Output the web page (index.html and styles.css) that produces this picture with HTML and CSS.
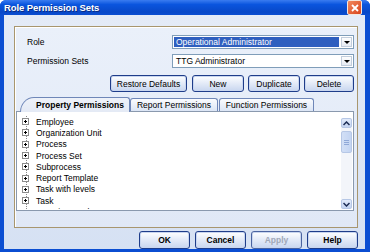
FILE: index.html
```html
<!DOCTYPE html>
<html lang="en">
<head>
    <meta charset="UTF-8">
    <title>Role Permission Sets</title>
    <link rel="stylesheet" href="styles.css">
</head>
<body>
    <div class="window">
        <!-- Title bar -->
        <div class="titlebar">
            <span class="title">Role Permission Sets</span>
            <span class="close">
                <svg width="8" height="8" viewBox="0 0 8 8"><path d="M1 1L7 7M7 1L1 7" stroke="#fff" stroke-width="1.8"/></svg>
            </span>
        </div>

        <div class="dialog-body">
            <div class="group">
                <div class="field-row">
                    <label>Role</label>
                    <div class="combo">
                        <span class="combo-text selected">Operational Administrator</span>
                        <span class="combo-arrow"></span>
                    </div>
                </div>
                <div class="field-row">
                    <label>Permission Sets</label>
                    <div class="combo">
                        <span class="combo-text">TTG Administrator</span>
                        <span class="combo-arrow"></span>
                    </div>
                </div>

                <div class="action-row">
                    <button class="btn btn-wide">Restore Defaults</button>
                    <button class="btn btn-mid">New</button>
                    <button class="btn btn-mid">Duplicate</button>
                    <button class="btn btn-small">Delete</button>
                </div>

                <!-- Tabs -->
                <div class="tabs">
                    <div class="tab tab-active">Property Permissions</div>
                    <div class="tab tab-report">Report Permissions</div>
                    <div class="tab tab-function">Function Permissions</div>
                </div>
                <div class="tab-page">
                    <ul class="tree">
                        <li><span class="expander"></span>Employee</li>
                        <li><span class="expander"></span>Organization Unit</li>
                        <li><span class="expander"></span>Process</li>
                        <li><span class="expander"></span>Process Set</li>
                        <li><span class="expander"></span>Subprocess</li>
                        <li><span class="expander"></span>Report Template</li>
                        <li><span class="expander"></span>Task with levels</li>
                        <li><span class="expander"></span>Task</li>
                        <li><span class="expander"></span>Security Levels</li>
                    </ul>
                    <div class="scrollbar">
                        <div class="scroll-btn">
                            <svg width="7" height="5" viewBox="0 0 7 5"><path d="M0.5 4L3.5 1L6.5 4" fill="none" stroke="#1d2d55" stroke-width="1.5"/></svg>
                        </div>
                        <div class="scroll-thumb"><span></span><span></span><span></span></div>
                        <div class="scroll-track"></div>
                        <div class="scroll-btn">
                            <svg width="7" height="5" viewBox="0 0 7 5"><path d="M0.5 1L3.5 4L6.5 1" fill="none" stroke="#1d2d55" stroke-width="1.5"/></svg>
                        </div>
                    </div>
                </div>
            </div>

            <div class="footer-row">
                <button class="btn btn-foot">OK</button>
                <button class="btn btn-foot">Cancel</button>
                <button class="btn btn-foot" disabled>Apply</button>
                <button class="btn btn-foot">Help</button>
            </div>
        </div>
    </div>
</body>
</html>
```

FILE: styles.css
```css
/* General Styles */
body {
    margin: 0;
    font-family: 'Liberation Sans', Arial, sans-serif;
    font-size: 8.5px;
    color: #000;
    background: #fff;
}

.window {
    width: 370px;
    height: 252px;
    box-sizing: border-box;
    display: flex;
    flex-direction: column;
    background: #0b4ed2;
    padding: 0 5px 4px 4px;
    border-radius: 6px 6px 0 0;
    overflow: hidden;
}

/* Title bar */
.titlebar {
    height: 18px;
    margin: 0 -5px 0 -4px;
    padding: 0 8px 0 4px;
    display: flex;
    align-items: center;
    justify-content: space-between;
    background: linear-gradient(#3a7cf0, #0a55de 30%, #0848c8 80%, #0b4ed2);
}

.title {
    color: white;
    font-weight: 700;
    font-size: 9.5px;
    letter-spacing: -0.1px;
    text-shadow: 1px 1px 0 #0a2a80;
}

.close {
    width: 13px;
    height: 13px;
    border: 1px solid #f4e6dc;
    border-radius: 2px;
    background: linear-gradient(135deg, #f28a5e, #d8431c);
    display: flex;
    align-items: center;
    justify-content: center;
}

/* Dialog body */
.dialog-body {
    flex: 1;
    background: linear-gradient(#e4ebf7, #d6e1f3);
    padding: 11px 7px 0 10px;
    display: flex;
    flex-direction: column;
}

.group {
    height: 192px;
    border: 1px solid #a8966e;
    box-shadow: inset 1px 1px 0 #fff;
    background: linear-gradient(#eaf0fa, #e0e8f6);
    padding: 8px 3px 0 1px;
    display: flex;
    flex-direction: column;
}

.field-row {
    height: 14px;
    display: flex;
    align-items: center;
    margin-bottom: 5px;
}

.field-row label {
    padding-left: 11px;
}

.combo {
    margin-left: auto;
    width: 182px;
    height: 14px;
    box-sizing: border-box;
    border: 1px solid #7f9db9;
    background: white;
    display: flex;
    align-items: center;
    padding: 1px;
}

.combo-text {
    flex: 1;
    height: 100%;
    display: flex;
    align-items: center;
    padding-left: 2px;
}

.combo-text.selected {
    background: #2f5fbf;
    color: white;
}

.combo-arrow {
    width: 11px;
    height: 100%;
    margin-left: 2px;
    box-sizing: border-box;
    border: 1px solid #c2cddc;
    background: linear-gradient(#fdfdfd, #e6ebf3);
    display: flex;
    align-items: center;
    justify-content: center;
}

.combo-arrow::after {
    content: "";
    border-left: 3px solid transparent;
    border-right: 3px solid transparent;
    border-top: 3px solid #000;
}

/* Buttons */
.btn {
    font-family: inherit;
    font-size: 8.5px;
    height: 17px;
    padding: 0;
    box-sizing: border-box;
    border: 1px solid #1f3d8a;
    border-radius: 3px;
    background: linear-gradient(#ffffff, #e8eef9 40%, #c8d6ef);
    color: #000;
    box-shadow: inset 0 0 0 1px #c9d6ef;
}

.btn:disabled {
    color: #a0a8b8;
    border-color: #4a63a0;
}

.action-row {
    display: flex;
    justify-content: flex-end;
    gap: 4px;
    margin-top: 2px;
}

.btn-wide {
    width: 77px;
    margin-right: 1px;
}

.btn-mid {
    width: 52px;
}

.btn-small {
    width: 50px;
}

/* Tabs */
.tabs {
    display: flex;
    margin-top: 5px;
    padding-left: 4px;
    height: 14px;
    align-items: flex-end;
}

.tab {
    height: 13px;
    box-sizing: border-box;
    border: 1px solid #6f87b8;
    border-bottom: none;
    border-radius: 3px 3px 0 0;
    background: linear-gradient(#fbfcfe, #dbe5f5);
    display: flex;
    align-items: center;
    justify-content: center;
}

.tab-active {
    height: 15px;
    width: 110px;
    font-weight: 700;
    padding-left: 10px;
    border-radius: 14px 3px 0 0 / 15px 3px 0 0;
    background: linear-gradient(#eef2f9, #e4eaf5);
    position: relative;
    z-index: 1;
    margin-bottom: -1px;
}

.tab-report {
    width: 88px;
}

.tab-function {
    width: 95px;
    margin-left: 1px;
}

.tab-page {
    height: 100px;
    box-sizing: border-box;
    border: 1px solid #8a99ae;
    background: white;
    display: flex;
    padding: 4px 1px 1px 5px;
}

.tree {
    flex: 1;
    list-style: none;
    margin: 0;
    padding: 0;
    overflow: hidden;
    background-image: linear-gradient(#8a8a8a 50%, transparent 50%);
    background-size: 1px 2px;
    background-repeat: repeat-y;
    background-position: 4px 0;
}

.tree li {
    height: 11.3px;
    display: flex;
    align-items: center;
}

.expander {
    width: 7px;
    height: 7px;
    box-sizing: border-box;
    border: 1px solid #8c8c8c;
    background: white;
    margin-right: 7px;
    position: relative;
}

.expander::before,
.expander::after {
    content: "";
    position: absolute;
    background: #000;
}

.expander::before {
    left: 1px;
    top: 2px;
    width: 3px;
    height: 1px;
}

.expander::after {
    left: 2px;
    top: 1px;
    width: 1px;
    height: 3px;
}

/* Scrollbar */
.scrollbar {
    width: 11px;
    margin-top: 2px;
    display: flex;
    flex-direction: column;
    background: #f3f5fa;
}

.scroll-btn {
    height: 10px;
    box-sizing: border-box;
    border: 1px solid #b6c7e6;
    border-radius: 2px;
    background: linear-gradient(#e2ebfb, #c3d3f1);
    display: flex;
    align-items: center;
    justify-content: center;
}

.scroll-thumb {
    height: 22px;
    margin-top: 3px;
    box-sizing: border-box;
    border: 1px solid #b6c7e6;
    border-radius: 2px;
    background: linear-gradient(90deg, #d2dff6, #c3d4f2);
    display: flex;
    flex-direction: column;
    align-items: center;
    justify-content: center;
    gap: 1px;
}

.scroll-thumb span {
    width: 5px;
    height: 1px;
    background: #8fa8d8;
}

.scroll-track {
    flex: 1;
}

/* Footer buttons */
.footer-row {
    display: flex;
    justify-content: flex-end;
    gap: 5px;
    margin-top: 3px;
}

.btn-foot {
    width: 51px;
    height: 18px;
    font-weight: 700;
}
```
